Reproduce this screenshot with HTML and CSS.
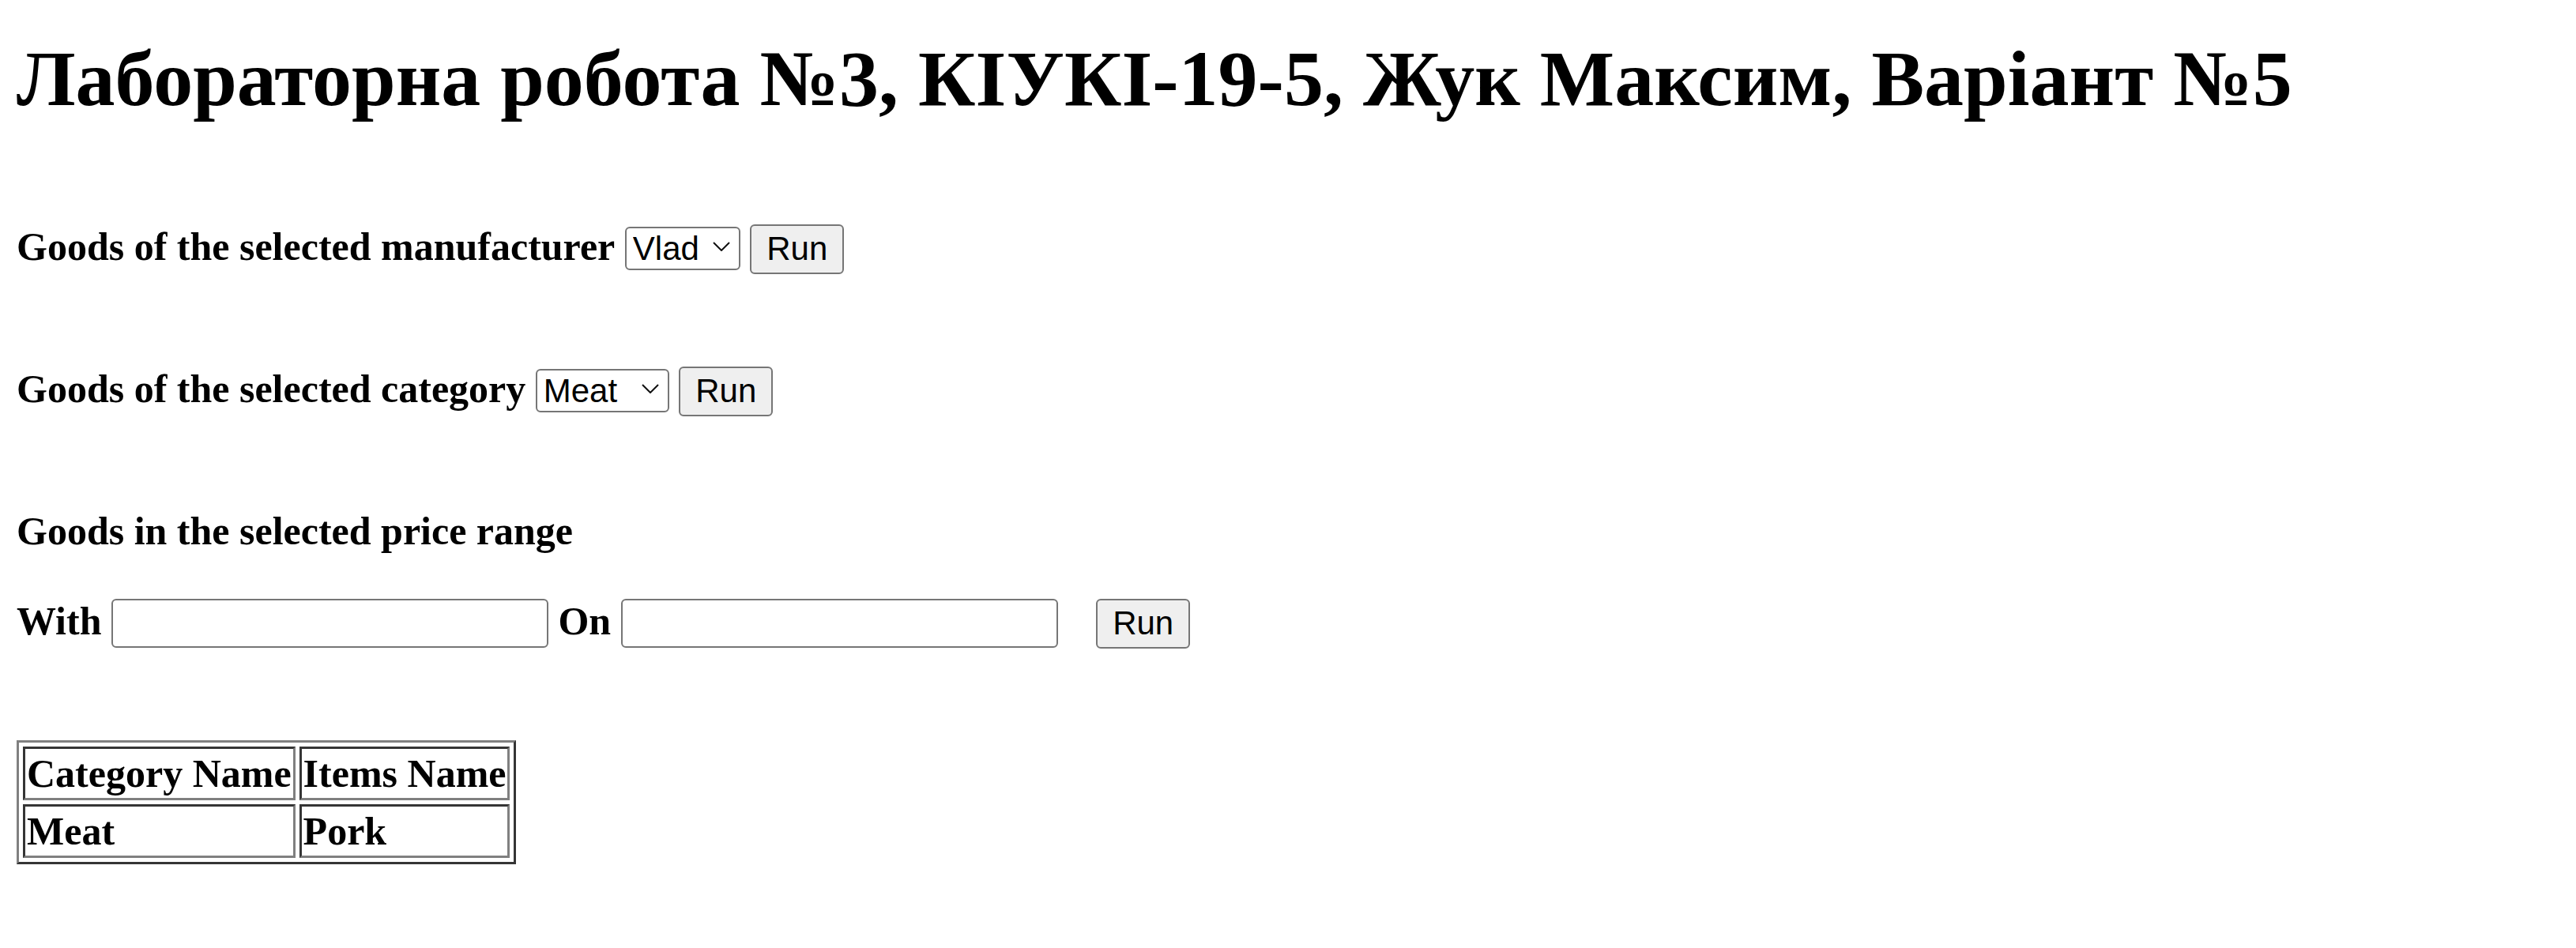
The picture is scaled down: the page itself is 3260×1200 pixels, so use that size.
FILE: index.html
```html
<!DOCTYPE html>
<html lang="uk">
<head>
<meta charset="utf-8">
<title>Лабораторна робота №3</title>
<link rel="stylesheet" href="styles.css">
</head>
<body>
<h1 class="title">Лабораторна робота №3, КІУКІ-19-5, Жук Максим, Варіант №5</h1>

<form class="row row-maker"><b class="label">Goods of the selected manufacturer</b> <span class="sel sel-maker"><select class="sel-box"><option>Vlad</option></select><svg class="chev" viewBox="0 0 22 12" width="22" height="12"><polyline points="1,1 11,11 21,1"/></svg></span> <button class="run" type="button">Run</button></form>

<form class="row row-cat"><b class="label">Goods of the selected category</b> <span class="sel sel-cat"><select class="sel-box"><option>Meat</option></select><svg class="chev" viewBox="0 0 22 12" width="22" height="12"><polyline points="1,1 11,11 21,1"/></svg></span> <button class="run" type="button">Run</button></form>

<div class="row row-price-title"><b class="label">Goods in the selected price range</b></div>

<form class="row row-price"><b class="label">With</b> <input class="field" type="text"> <b class="label">On</b> <input class="field" type="text"> <button class="run run-gap" type="button">Run</button></form>

<table class="result">
<tr><th>Category Name</th><th>Items Name</th></tr>
<tr><td><b>Meat</b></td><td><b>Pork</b></td></tr>
</table>
</body>
</html>
```

FILE: styles.css
```css
html, body {
  margin: 0;
  padding: 0;
  background: #ffffff;
}

body {
  padding: 0 21px;
  font-family: "Liberation Serif", "Times New Roman", serif;
  color: #000000;
}

.title {
  margin: 42px 0 0 0;
  font-size: 100px;
  line-height: 115px;
  font-weight: bold;
  white-space: nowrap;
}

.row {
  margin: 0;
  font-size: 50px;
  line-height: 80px;
  white-space: nowrap;
}

.row-maker { margin-top: 115px; }
.row-cat { margin-top: 100px; }
.row-price-title { margin-top: 100px; }
.row-price { margin-top: 34px; }

.label {
  font-weight: bold;
}

.sel {
  position: relative;
  display: inline-block;
}

.sel-maker { width: 146px; }
.sel-cat { width: 169px; }

.sel-box {
  appearance: none;
  -webkit-appearance: none;
  box-sizing: border-box;
  width: 100%;
  height: 55px;
  margin: 0;
  padding: 0 40px 0 8px;
  border: 2px solid #767676;
  border-radius: 6px;
  background: #ffffff;
  color: #000000;
  font-family: "Liberation Sans", Arial, sans-serif;
  font-size: 42px;
  vertical-align: baseline;
}

.chev {
  position: absolute;
  right: 13px;
  top: 50%;
  margin-top: -6px;
  fill: none;
  stroke: #111111;
  stroke-width: 2;
  pointer-events: none;
}

.run {
  box-sizing: border-box;
  height: 63px;
  margin: 0;
  padding: 0 19px;
  border: 2px solid #767676;
  border-radius: 6px;
  background: #efefef;
  color: #000000;
  font-family: "Liberation Sans", Arial, sans-serif;
  font-size: 42px;
  line-height: 48px;
  vertical-align: baseline;
}

.run-gap {
  margin-left: 36px;
}

.field {
  box-sizing: border-box;
  width: 553px;
  height: 62px;
  margin: 0;
  padding: 0 6px;
  border: 2px solid #767676;
  border-radius: 6px;
  background: #ffffff;
  font-family: "Liberation Sans", Arial, sans-serif;
  font-size: 42px;
  vertical-align: baseline;
}

.result {
  margin-top: 111px;
  border-collapse: separate;
  border-spacing: 5px;
  border: 3px solid;
  border-color: #808080 #353535 #353535 #808080;
  font-size: 50px;
}

.result th,
.result td {
  padding: 2px;
  border: 3px solid;
  border-color: #353535 #808080 #808080 #353535;
  font-weight: bold;
  text-align: left;
  line-height: normal;
}

.result th {
  text-align: center;
}
```
